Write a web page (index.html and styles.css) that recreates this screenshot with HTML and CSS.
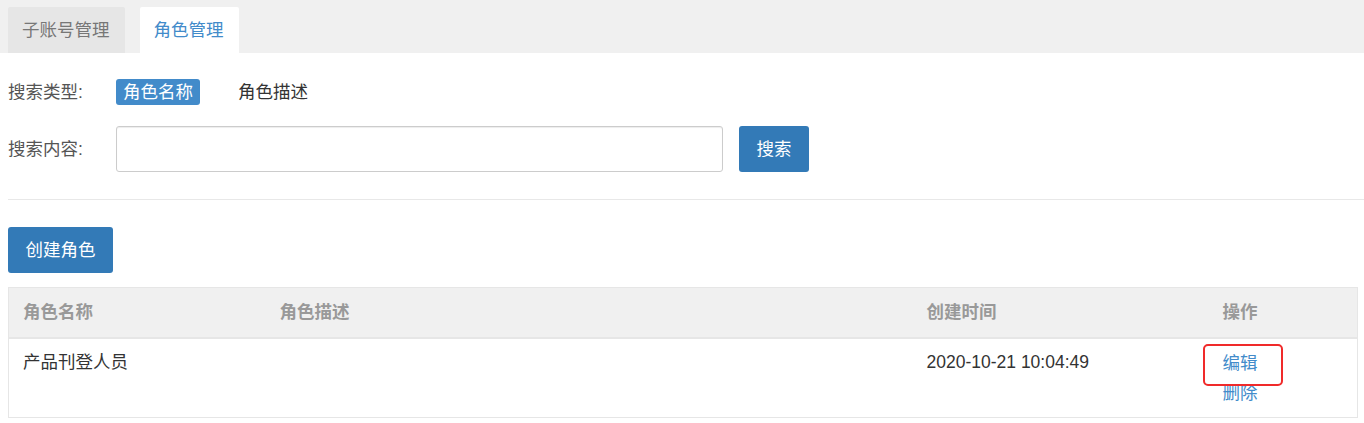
FILE: index.html
```html
<!DOCTYPE html>
<html lang="zh">
<head>
<meta charset="utf-8">
<title>角色管理</title>
<link rel="stylesheet" href="styles.css">
</head>
<body>
<div class="tabbar">
  <div class="tab">子账号管理</div>
  <div class="tab active">角色管理</div>
</div>
<div class="main">
  <div class="row row-type">
    <div class="label">搜索类型:</div>
    <span class="badge">角色名称</span>
    <span class="opt">角色描述</span>
  </div>
  <div class="row row-search">
    <div class="label">搜索内容:</div>
    <input class="input" type="text">
    <button class="btn btn-search">搜索</button>
  </div>
</div>
<hr class="divider">
<div class="main">
  <button class="btn btn-create">创建角色</button>
  <table class="table">
    <colgroup>
      <col class="c1"><col class="c2"><col class="c3"><col class="c4">
    </colgroup>
    <thead>
      <tr><th>角色名称</th><th>角色描述</th><th>创建时间</th><th>操作</th></tr>
    </thead>
    <tbody>
      <tr>
        <td>产品刊登人员</td>
        <td></td>
        <td>2020-10-21 10:04:49</td>
        <td class="ops"><a class="link link-edit">编辑</a><a class="link">删除</a></td>
      </tr>
    </tbody>
  </table>
</div>
</body>
</html>
```
FILE: styles.css
```css
* { box-sizing: border-box; }
html, body { margin: 0; padding: 0; background: #fff; }
body {
  font-family: "Liberation Sans", "Noto Sans CJK SC", sans-serif;
  font-size: 17.5px;
  color: #333;
  line-height: 1.42857;
}
.tabbar {
  display: flex;
  gap: 15px;
  background: #f0f0f0;
  height: 53px;
  padding: 7px 0 0 8px;
}
.tab {
  height: 46px;
  padding: 0 15px 0 14px;
  display: flex;
  align-items: center;
  background: #e6e6e6;
  color: #777;
  border-radius: 2px 2px 0 0;
}
.tab.active {
  background: #fff;
  color: #428bca;
  padding: 0 15px 0 14px;
}
.main { padding: 0 7px 0 8px; }
.row { display: flex; align-items: center; }
.row-type { margin-top: 26px; height: 26px; }
.row-search { margin-top: 21px; height: 46px; }
.label { width: 108px; color: #555; }
.badge {
  background: #428bca;
  color: #fff;
  border-radius: 3px;
  height: 26px;
  padding: 0 7px;
  display: flex;
  align-items: center;
}
.opt { margin-left: 38px; color: #333; }
.input {
  width: 607px;
  height: 46px;
  border: 1px solid #ccc;
  border-radius: 3px;
  box-shadow: inset 0 1px 1px rgba(0,0,0,.075);
  font: inherit;
  padding: 0 12px;
}
.btn {
  font: inherit;
  background: #337ab7;
  color: #fff;
  border: 0;
  border-radius: 3px;
  height: 46px;
  padding: 0 17px;
  line-height: 46px;
}
.btn-search { margin-left: 16px; width: 70px; padding: 0; }
.divider {
  border: 0;
  border-top: 1px solid #e8e8e8;
  margin: 27px 0 0 8px;
}
.btn-create { display: block; margin-top: 27px; width: 105px; padding: 0; }
.table {
  margin-top: 14px;
  width: 100%;
  border-collapse: collapse;
  border: 1px solid #e6e6e6;
  table-layout: fixed;
}
.c1 { width: 257px; }
.c2 { width: 647px; }
.c3 { width: 296px; }
.c4 { width: 149px; }
.table th {
  background: #f0f0f0;
  color: #999;
  font-weight: bold;
  text-align: left;
  height: 50px;
  padding: 0 14px;
  border-bottom: 2px solid #e6e6e6;
}
.table td {
  vertical-align: top;
  padding: 11px 14px 0;
  height: 80px;
  border-bottom: 1px solid #e6e6e6;
}
.table td.ops { padding-top: 9px; }
.link {
  display: block;
  color: #428bca;
  line-height: 30px;
  cursor: pointer;
}
.link-edit { position: relative; }
.link-edit::after {
  content: "";
  position: absolute;
  left: -20px;
  top: -4px;
  width: 76px;
  height: 38px;
  border: 2px solid #f02a2a;
  border-radius: 5px;
}
```
